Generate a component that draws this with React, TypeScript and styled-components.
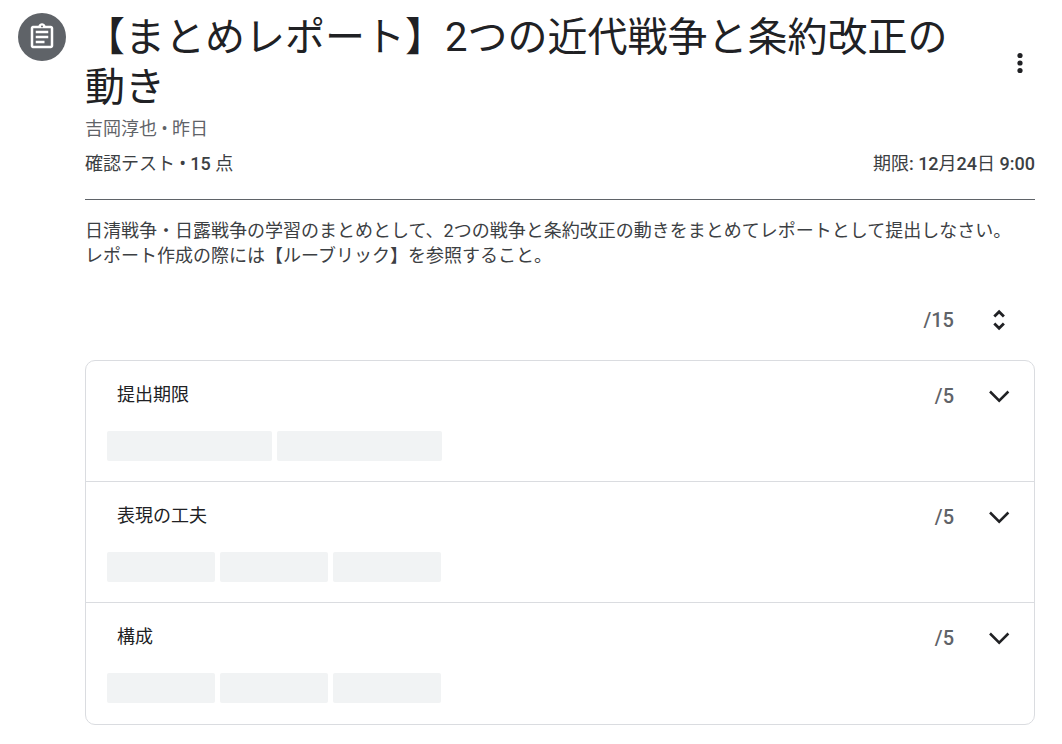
import React from "react";
import styled, { createGlobalStyle } from "styled-components";

const GlobalStyle = createGlobalStyle`
  * { box-sizing: border-box; }
  body {
    margin: 0;
    background: #fff;
    color: #202124;
    font-family: Roboto, "Noto Sans CJK JP", sans-serif;
    font-size: 18px;
    line-height: 25px;
  }
`;

const Page = styled.main`
  display: flex;
  align-items: flex-start;
  gap: 19px;
  padding: 13px 27px 19px 18px;
`;

const Badge = styled.div`
  flex: none;
  display: grid;
  place-items: center;
  width: 48px;
  height: 48px;
  border-radius: 50%;
  background: #5f6368;
`;

const Content = styled.article`
  flex: 1;
  min-width: 0;
`;

const Header = styled.header`
  display: flex;
  align-items: center;
  justify-content: space-between;
  gap: 24px;
`;

const Title = styled.h1`
  margin: 0;
  font-size: 40px;
  font-weight: 400;
  line-height: 50px;
`;

const IconButton = styled.button`
  flex: none;
  display: grid;
  place-items: center;
  width: 30px;
  height: 30px;
  padding: 0;
  border: 0;
  border-radius: 50%;
  background: none;
  color: #202124;
  cursor: pointer;
`;

const Byline = styled.p`
  margin: 3px 0 0;
  color: #5f6368;
`;

const Details = styled.div`
  display: flex;
  justify-content: space-between;
  padding: 10px 0 23px;
  border-bottom: 1px solid #5f6368;
  color: #3c4043;
`;

const Figure = styled.span`
  font-weight: 500;
`;

const Description = styled.p`
  margin: 18px 0 0;
  color: #3c4043;
`;

const ScoreLine = styled.div`
  display: flex;
  align-items: center;
  justify-content: flex-end;
  gap: 30px;
`;

const Total = styled(ScoreLine)`
  padding: 37px 21px 25px 0;
`;

const Score = styled.span`
  color: #5f6368;
  font-size: 20px;
  font-weight: 500;
  line-height: 24px;
`;

const Rubric = styled.section`
  padding-bottom: 1px;
  border: 1px solid #dadce0;
  border-radius: 10px;
`;

const Criterion = styled.div`
  padding: 20px 20px 20px 21px;

  & + & {
    border-top: 1px solid #dadce0;
  }
`;

const CriterionHead = styled.div`
  display: flex;
  align-items: flex-start;
  justify-content: space-between;
  height: 30px;
  padding-left: 10px;
`;

const CriterionName = styled.h2`
  margin: 0;
  font-size: 18px;
  font-weight: 400;
  line-height: 27px;
`;

const Levels = styled.div`
  display: flex;
  gap: 5px;
  margin-top: 20px;
`;

const Level = styled.div<{ $wide: boolean }>`
  width: ${(p) => (p.$wide ? 165 : 108)}px;
  height: 30px;
  border-radius: 2px;
  background: #f1f3f4;
`;

const AssignmentIcon = () => (
  <svg width="30" height="30" viewBox="0 0 24 24" fill="#fff" aria-hidden="true">
    <path d="M7 15h7v2H7zm0-4h10v2H7zm0-4h10v2H7zm12-4h-4.18C14.4 1.84 13.3 1 12 1c-1.3 0-2.4.84-2.82 2H5c-.14 0-.27.01-.4.04-.39.08-.74.28-1.01.55-.18.18-.33.4-.43.64-.1.23-.16.49-.16.77v14c0 .27.06.54.16.78s.25.45.43.64c.27.27.62.47 1.01.55.13.02.26.03.4.03h14c1.1 0 2-.9 2-2V5c0-1.1-.9-2-2-2zm-7-.25c.41 0 .75.34.75.75s-.34.75-.75.75-.75-.34-.75-.75.34-.75.75-.75zM19 19H5V5h14v14z" />
  </svg>
);

const MoreIcon = () => (
  <svg width="30" height="30" viewBox="0 0 30 30" fill="currentColor" aria-hidden="true">
    <circle cx="15" cy="7.5" r="2.6" />
    <circle cx="15" cy="15" r="2.6" />
    <circle cx="15" cy="22.5" r="2.6" />
  </svg>
);

const ExpandIcon = () => (
  <svg width="30" height="30" viewBox="0 0 30 30" fill="none" stroke="currentColor" strokeWidth="2.5" aria-hidden="true">
    <path d="M6 10.5l9.2 9.2 9.2-9.2" />
  </svg>
);

const UnfoldIcon = () => (
  <svg width="30" height="30" viewBox="0 0 30 30" fill="none" stroke="currentColor" strokeWidth="2.8" aria-hidden="true">
    <path d="M10.3 11.6l4.8-4.8 4.8 4.8M10.3 18.4l4.8 4.8 4.8-4.8" />
  </svg>
);

const criteria = [
  { name: "提出期限", points: 5, levels: 2 },
  { name: "表現の工夫", points: 5, levels: 3 },
  { name: "構成", points: 5, levels: 3 },
];

export default function App() {
  return (
    <>
      <GlobalStyle />
      <Page lang="ja">
        <Badge>
          <AssignmentIcon />
        </Badge>
        <Content>
          <Header>
            <Title>【まとめレポート】2つの近代戦争と条約改正の動き</Title>
            <IconButton type="button" aria-label="その他のオプション">
              <MoreIcon />
            </IconButton>
          </Header>
          <Byline>吉岡淳也 • 昨日</Byline>
          <Details>
            <span>
              確認テスト<Figure> • 15 </Figure>点
            </span>
            <span>
              期限<Figure>: 12</Figure>月<Figure>24</Figure>日<Figure> 9:00</Figure>
            </span>
          </Details>
          <Description>
            日清戦争・日露戦争の学習のまとめとして、2つの戦争と条約改正の動きをまとめてレポートとして提出しなさい。
            <br />
            レポート作成の際には【ルーブリック】を参照すること。
          </Description>
          <Total>
            <Score>/15</Score>
            <IconButton type="button" aria-label="すべて展開">
              <UnfoldIcon />
            </IconButton>
          </Total>
          <Rubric>
            {criteria.map((c) => (
              <Criterion key={c.name}>
                <CriterionHead>
                  <CriterionName>{c.name}</CriterionName>
                  <ScoreLine>
                    <Score>/{c.points}</Score>
                    <IconButton type="button" aria-label={`${c.name}を展開`}>
                      <ExpandIcon />
                    </IconButton>
                  </ScoreLine>
                </CriterionHead>
                <Levels>
                  {Array.from({ length: c.levels }, (_, i) => (
                    <Level key={i} $wide={c.levels === 2} />
                  ))}
                </Levels>
              </Criterion>
            ))}
          </Rubric>
        </Content>
      </Page>
    </>
  );
}
